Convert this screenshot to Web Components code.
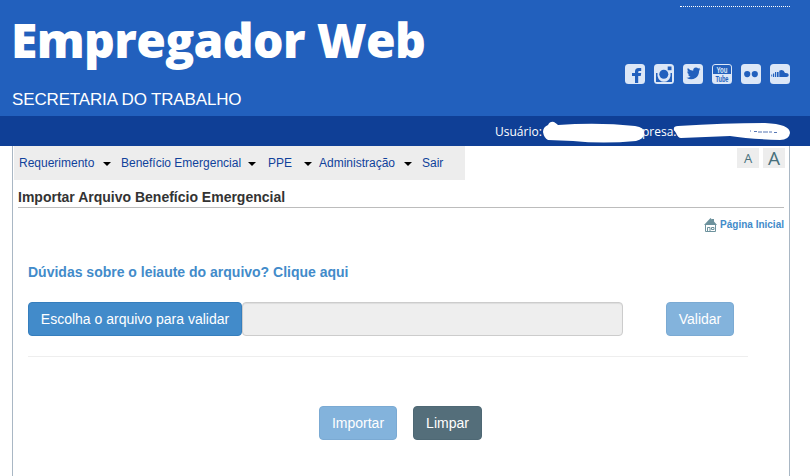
<!DOCTYPE html>
<html lang="pt-BR">
<head>
<meta charset="utf-8">
<title>Empregador Web</title>
<style>
  body {
    margin: 0;
    background: #fff;
    font-family: "Liberation Sans", Arial, sans-serif;
    font-size: 14px;
    color: #333;
    overflow: hidden;
  }
</style>
</head>
<body>

<site-header>
  <span slot="title">Empregador Web</span>
  <span slot="subtitle">SECRETARIA DO TRABALHO</span>
  <social-icon slot="social" name="facebook"></social-icon>
  <social-icon slot="social" name="instagram"></social-icon>
  <social-icon slot="social" name="twitter"></social-icon>
  <social-icon slot="social" name="youtube"></social-icon>
  <social-icon slot="social" name="flickr"></social-icon>
  <social-icon slot="social" name="soundcloud"></social-icon>
</site-header>

<user-bar>
  <span slot="user">Usuário:</span>
  <span slot="company">presa:</span>
</user-bar>

<page-frame>
  <main-menu slot="menu">
    <menu-entry arrow style="width:102px">Requerimento</menu-entry>
    <menu-entry arrow style="width:147px;padding-right:12px">Benefício Emergencial</menu-entry>
    <menu-entry arrow style="width:51px;padding-right:7px">PPE</menu-entry>
    <menu-entry arrow style="width:103px">Administração</menu-entry>
    <menu-entry>Sair</menu-entry>
  </main-menu>
  <font-size-button slot="tools" style="font-size:13px">A</font-size-button>
  <font-size-button slot="tools" style="font-size:19px">A</font-size-button>
  <page-title>Importar Arquivo Benefício Emergencial</page-title>
  <home-link>Página Inicial</home-link>
  <import-form>
    <span slot="help">Dúvidas sobre o leiaute do arquivo? Clique aqui</span>
    <app-button slot="choose" style="width:214px">Escolha o arquivo para validar</app-button>
    <app-button slot="validate" disabled style="width:68px">Validar</app-button>
    <app-button slot="actions" disabled style="width:78px">Importar</app-button>
    <app-button slot="actions" kind="dark" style="width:69px">Limpar</app-button>
  </import-form>
</page-frame>

<script>
(function(){

  function define(name, html, setup) {
    const template = document.createElement("template");
    template.innerHTML = html;
    window.customElements.define(name, class extends HTMLElement {
      constructor() {
        super();
        this.attachShadow({ mode: "open" });
        this.shadowRoot.appendChild(document.importNode(template.content, true));
      }
      connectedCallback() {
        if (setup) setup(this);
      }
    });
  }

  // blue top area
  define("site-header", `
  <style>
  :host {
    display: flex;
    justify-content: space-between;
    box-sizing: border-box;
    height: 116px;
    padding: 0 20px 0 12px;
    background: #2260bd;
    color: #fff;
  }
  .brand { display: flex; flex-direction: column; }
  .title {
    margin: 6px 0 0 -1px;
    font: 800 48px/68px "Open Sans", sans-serif;
    letter-spacing: -.65px;
    white-space: nowrap;
  }
  .subtitle {
    margin-top: 16px;
    font-size: 17px;
    line-height: 20px;
    letter-spacing: -.15px;
    white-space: nowrap;
  }
  .side { display: flex; flex-direction: column; align-items: flex-end; }
  .dots { width: 110px; height: 6px; border-bottom: 1px dotted #fff; }
  .social { display: flex; gap: 9px; margin-top: 57px; }
  </style>
  <div class="brand">
    <h1 class="title"><slot name="title"></slot></h1>
    <div class="subtitle"><slot name="subtitle"></slot></div>
  </div>
  <div class="side">
    <div class="dots"></div>
    <div class="social"><slot name="social"></slot></div>
  </div>
  `);

  const glyphs = {
    facebook: '<path d="M10 19v-7H7V9h3V7.500Q10 4 13.500 4H16.200v3H14.300Q13.200 7 13.200 8V9h3l-.5 3h-2.500v7z"/>',
    instagram: '<path d="M13.700 2.500h3.800v3.700h-3.800z"/><path d="M2 9h1.500v3Q5 17.800 10 17.800T16.500 12V9H18v9H2z"/><circle cx="9.800" cy="10.300" r="4.500"/>',
    twitter: '<path d="M3.500 13.700Q6 13.900 7.500 12.700Q5.500 12.300 5 10.600H6.300Q4.100 9.500 4.200 7.300L5.500 7.700Q3.600 6 4.800 4Q7 6.600 10.200 6.800Q9.900 3.700 13 3.500Q14.400 3.500 15.200 4.400L17 3.700L16 5.400L17.500 5L16.100 6.700Q16.100 11.500 12.500 14Q8 16.700 3.500 13.700z"/>',
    youtube: '<path d="M1 3Q1 1 3 1H17Q19 1 19 3V10H1z"/>',
    flickr: '<circle cx="6.200" cy="10.100" r="3.100"/><circle cx="13.800" cy="10.100" r="3.100"/>',
    soundcloud: '<path d="M9.300 6.700Q13.500 4.800 15 9Q18.700 8.700 18.700 11.300Q18.700 13 16.500 13H9.300z"/><path d="M7 8h1.600v5H7zM5 8h1.200v5H5zM3 9.500h1.200V13H3zM1.300 10.500h.9v2h-.9z"/>'
  };

  define("social-icon", `
  <style>
  :host { display: block; width: 20px; height: 20px; }
  svg { display: block; overflow: visible; }
  text { font: 700 8.500px "Liberation Sans Narrow", "Liberation Sans", sans-serif; }
  </style>
  <svg width="20" height="20" viewBox="0 0 20 20">
    <rect width="20" height="20" rx="3.500" fill="#dce7f7"/>
    <g fill="#2260bd"></g>
  </svg>
  `, function(el) {
    const name = el.getAttribute("name");
    el.shadowRoot.querySelector("g").innerHTML = glyphs[name];
    if (name === "youtube") {
      el.shadowRoot.querySelector("svg").insertAdjacentHTML("beforeend",
        '<text x="4.500" y="8.600" textLength="11" lengthAdjust="spacingAndGlyphs" fill="#dce7f7">You</text>' +
        '<text x="3.500" y="17.500" textLength="13" lengthAdjust="spacingAndGlyphs" fill="#2260bd">Tube</text>');
    }
  });

  // user and company, both names covered with brush strokes
  define("user-bar", `
  <style>
  :host {
    display: flex;
    position: relative;
    box-sizing: border-box;
    height: 30px;
    padding-left: 495px;
    background: #0f3f96;
    color: #fff;
    font: 12px/31px "Open Sans", sans-serif;
  }
  .user { width: 147px; }
  svg { position: absolute; left: 540px; top: 0; }
  </style>
  <div class="user"><slot name="user"></slot></div>
  <div><slot name="company"></slot></div>
  <svg width="260" height="30" viewBox="540 116 260 30" fill="#fff">
    <path d="M543 132Q543 127 548 125Q550 121 554 122Q557 124 558 125Q598 122 635 126Q645 127 644 134Q644 139 636 141Q603 144 573 141L548 140Q544 138 543 132z"/>
    <path d="M674 130Q673 126 678 126Q725 123 765 123Q790 124 790 133Q789 140 780 140Q750 139 730 136L681 138Q678 138 676 133z"/>
    <path d="M750 131h1m3 .5h3m1 .5h4m1 0h5m1 0h3m2 .5h3" fill="none" stroke="#5676b4" stroke-width="1"/>
  </svg>
  `);

  define("page-frame", `
  <style>
  :host {
    display: block;
    box-sizing: border-box;
    width: 778px;
    height: 330px;
    margin-left: 12px;
    border: solid #a9b7c4;
    border-width: 0 1px;
  }
  .top { display: flex; justify-content: space-between; padding: 0 4px 0 1px; }
  .tools { display: flex; gap: 4px; padding-top: 2px; }
  </style>
  <div class="top">
    <slot name="menu"></slot>
    <div class="tools"><slot name="tools"></slot></div>
  </div>
  <slot></slot>
  `);

  define("main-menu", `
  <style>
  :host {
    display: flex;
    box-sizing: border-box;
    width: 451px;
    height: 34px;
    padding-left: 4px;
    background: #ededed;
  }
  </style>
  <slot></slot>
  `);

  define("menu-entry", `
  <style>
  :host {
    display: flex;
    box-sizing: border-box;
    justify-content: space-between;
    padding: 0 10px 0 1px;
    color: #10429b;
    font-size: 12px;
    line-height: 34px;
    white-space: nowrap;
  }
  i { display: none; }
  :host([arrow]) i {
    display: block;
    margin: 16px -1px 0 0;
    width: 0;
    height: 0;
    border: 4px solid transparent;
    border-top-color: #000;
    border-bottom: 0;
  }
  </style>
  <slot></slot><i></i>
  `);

  define("font-size-button", `
  <style>
  :host {
    display: block;
    width: 22px;
    height: 20px;
    background: #ededed;
    color: #47707c;
    font-family: "Open Sans", sans-serif;
    line-height: 21px;
    text-align: center;
  }
  </style>
  <slot></slot>
  `);

  define("page-title", `
  <style>
  :host {
    display: block;
    margin: 8px 5px 0;
    height: 19px;
    border-bottom: 1px solid #bcbcbc;
    font-weight: bold;
    line-height: 19px;
  }
  </style>
  <slot></slot>
  `);

  define("home-link", `
  <style>
  :host {
    display: flex;
    justify-content: flex-end;
    gap: 3px;
    height: 14px;
    margin: 10px 5px 0 0;
    color: #428bca;
    font-size: 10px;
    font-weight: bold;
    line-height: 14px;
  }
  </style>
  <svg width="13" height="14" viewBox="0 0 13 14">
    <path d="M6.500 0L8 1.500V1h2v2.500L13 7H0z" fill="#6d929d"/>
    <path d="M1.500 7v6.500h10V7M3.500 13V9.500h2.500V13M7.500 9.500h2.500v2h-2.500z" fill="none" stroke="#6d929d"/>
  </svg>
  <span><slot></slot></span>
  `);

  define("app-button", `
  <style>
  :host {
    display: block;
    box-sizing: border-box;
    height: 34px;
    border: 1px solid #357ebd;
    border-radius: 4px;
    background: #428bca;
    color: #fff;
    font-size: 14px;
    line-height: 32px;
    text-align: center;
    white-space: nowrap;
  }
  :host([disabled]) { opacity: .65; }
  :host([kind="dark"]) { background: #546e7a; border-color: #4e6874; }
  </style>
  <slot></slot>
  `);

  define("import-form", `
  <style>
  :host { display: block; padding: 30px 41px 0 15px; }
  .help { color: #428bca; font-weight: bold; line-height: 20px; }
  .row { display: flex; margin-top: 20px; }
  .file {
    box-sizing: border-box;
    width: 381px;
    height: 34px;
    margin-right: 43px;
    border: 1px solid #ccc;
    border-radius: 4px;
    background: #eee;
    box-shadow: inset 0 1px 1px rgba(0,0,0,.075);
  }
  hr { margin: 20px 0 0; border: 0; border-top: 1px solid #eee; }
  .actions { display: flex; gap: 16px; margin: 49px 0 0 291px; }
  </style>
  <div class="help"><slot name="help"></slot></div>
  <div class="row">
    <slot name="choose"></slot>
    <div class="file"></div>
    <slot name="validate"></slot>
  </div>
  <hr>
  <div class="actions"><slot name="actions"></slot></div>
  `);

})();
</script>
</body>
</html>
